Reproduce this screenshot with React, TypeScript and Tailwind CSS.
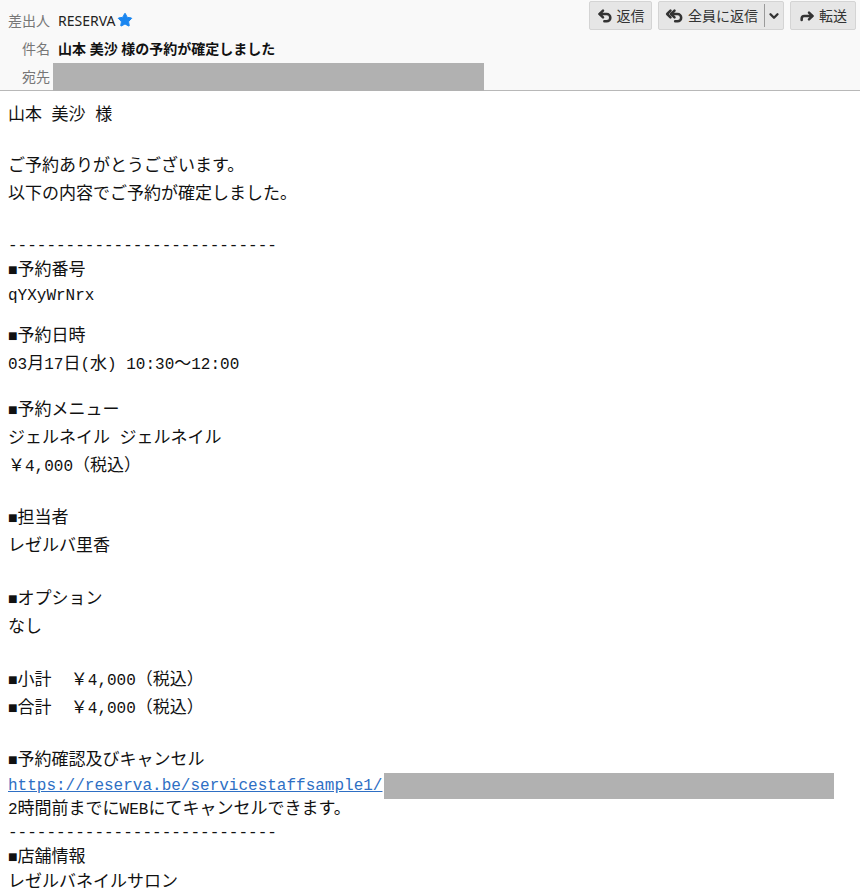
import { Star, Undo2, Forward, ChevronDown } from 'lucide-react';
import type { ReactNode } from 'react';

// Japanese runs get a slightly larger size than the mono ASCII text, like the mail client does
const mix = (s: string) =>
  s.split(/([^\x00-\x7F■]+)/).map((part, i) =>
    /[^\x00-\x7F■]/.test(part) ? (
      <span key={i} className="text-[17px]">{part}</span>
    ) : (
      part
    )
  );

const bodyLines: { text: string; h: string; link?: boolean }[] = [
  { text: '山本 美沙 様', h: 'h-[28px] leading-[28px]' },
  { text: '', h: 'h-[23px] leading-[23px]' },
  { text: 'ご予約ありがとうございます。', h: 'h-[28px] leading-[28px]' },
  { text: '以下の内容でご予約が確定しました。', h: 'h-[28px] leading-[28px]' },
  { text: '', h: 'h-[27px] leading-[27px]' },
  { text: '----------------------------', h: 'h-[21px] leading-[21px]' },
  { text: '■予約番号', h: 'h-[27px] leading-[27px]' },
  { text: 'qYXyWrNrx', h: 'h-[24px] leading-[24px]' },
  { text: '', h: 'h-[15px] leading-[15px]' },
  { text: '■予約日時', h: 'h-[28px] leading-[28px]' },
  { text: '03月17日(水) 10:30～12:00', h: 'h-[27px] leading-[27px]' },
  { text: '', h: 'h-[19px] leading-[19px]' },
  { text: '■予約メニュー', h: 'h-[28px] leading-[28px]' },
  { text: 'ジェルネイル ジェルネイル', h: 'h-[28px] leading-[28px]' },
  { text: '￥4,000（税込）', h: 'h-[27px] leading-[27px]' },
  { text: '', h: 'h-[25px] leading-[25px]' },
  { text: '■担当者', h: 'h-[28px] leading-[28px]' },
  { text: 'レゼルバ里香', h: 'h-[27px] leading-[27px]' },
  { text: '', h: 'h-[26px] leading-[26px]' },
  { text: '■オプション', h: 'h-[28px] leading-[28px]' },
  { text: 'なし', h: 'h-[28px] leading-[28px]' },
  { text: '', h: 'h-[25px] leading-[25px]' },
  { text: '■小計  ￥4,000（税込）', h: 'h-[28px] leading-[28px]' },
  { text: '■合計  ￥4,000（税込）', h: 'h-[28px] leading-[28px]' },
  { text: '', h: 'h-[25px] leading-[25px]' },
  { text: '■予約確認及びキャンセル', h: 'h-[25px] leading-[25px]' },
  { text: 'https://reserva.be/servicestaffsample1/', h: 'h-[26px] leading-[26px]', link: true },
  { text: '2時間前までにWEBにてキャンセルできます。', h: 'h-[21px] leading-[21px]' },
  { text: '----------------------------', h: 'h-[26px] leading-[26px]' },
  { text: '■店舗情報', h: 'h-[23px] leading-[23px]' },
  { text: 'レゼルバネイルサロン', h: 'h-[28px] leading-[28px]' },
];

function ReplyAllIcon() {
  return (
    <svg width="19" height="16" viewBox="0 0 28 24" fill="none" stroke="currentColor" strokeWidth="3.8" strokeLinecap="round" strokeLinejoin="round">
      <path d="M8 4 3 9l5 5" />
      <path d="M14 4 9 9l5 5" />
      <path d="M9 9h9.5a5.5 5.5 0 0 1 0 11H15" />
    </svg>
  );
}

function Btn({ children, className }: { children: ReactNode; className: string }) {
  return (
    <div className={`flex h-[29px] items-center justify-center gap-[4px] rounded-[2px] border border-[#d4d4d4] bg-[#e6e6e6] text-[14px] text-[#333] ${className}`}>
      {children}
    </div>
  );
}

export default function App() {
  return (
    <div className="h-screen w-full overflow-hidden bg-white">
      {/* Header */}
      <div className="h-[91px] border-b border-[#b8b8b8] bg-[#f9f9f9] font-['Noto_Sans','Noto_Sans_CJK_JP',sans-serif] text-[14px]">
        <div className="flex h-[34px] justify-between">
          <div className="mt-[6px] flex h-[28px] items-center">
            <div className="w-[50px] text-right text-[#777]">差出人</div>
            <div className="ml-[8px] text-[#222]">RESERVA</div>
            <Star className="ml-[2px] h-[16px] w-[16px] text-[#1a86f0]" fill="currentColor" strokeWidth={1.5} />
          </div>
          <div className="flex gap-[6px] pr-[4px] pt-[1px]">
            <Btn className="w-[63px]">
              <Undo2 className="h-[16px] w-[16px]" strokeWidth={3.8} />
              <span>返信</span>
            </Btn>
            <div className="flex h-[29px] rounded-[2px] border border-[#d4d4d4] bg-[#e6e6e6] text-[14px] text-[#333]">
              <div className="flex w-[105px] items-center justify-center gap-[4px]">
                <ReplyAllIcon />
                <span>全員に返信</span>
              </div>
              <div className="my-[2px] w-px bg-[#9a9a9a]" />
              <div className="flex w-[18px] items-center justify-center">
                <ChevronDown className="h-[14px] w-[14px]" strokeWidth={4} />
              </div>
            </div>
            <Btn className="w-[66px]">
              <Forward className="h-[16px] w-[16px]" strokeWidth={3.8} />
              <span>転送</span>
            </Btn>
          </div>
        </div>
        <div className="flex h-[29px] items-center">
          <div className="w-[50px] text-right text-[#777]">件名</div>
          <div className="ml-[8px] font-bold text-[#111]">山本 美沙 様の予約が確定しました</div>
        </div>
        <div className="flex h-[27px] items-start">
          <div className="flex h-[27px] w-[50px] items-center justify-end text-[#777]">宛先</div>
          <div className="ml-[3px] h-[28px] w-[431px] bg-[#b1b1b1]" />
        </div>
      </div>

      {/* Body */}
      <div className="whitespace-pre px-[8px] pt-[11px] font-['Liberation_Mono','Noto_Sans_CJK_JP',monospace] text-[16px] text-[#111]">
        {bodyLines.map((line, i) =>
          line.link ? (
            <div key={i} className={`flex ${line.h}`}>
              <a className="text-[#2e6fc4] underline">{line.text}</a>
              <div className="ml-[2px] h-[26px] w-[450px] bg-[#b1b1b1]" />
            </div>
          ) : (
            <div key={i} className={line.h}>
              {mix(line.text)}
            </div>
          )
        )}
      </div>
    </div>
  );
}
